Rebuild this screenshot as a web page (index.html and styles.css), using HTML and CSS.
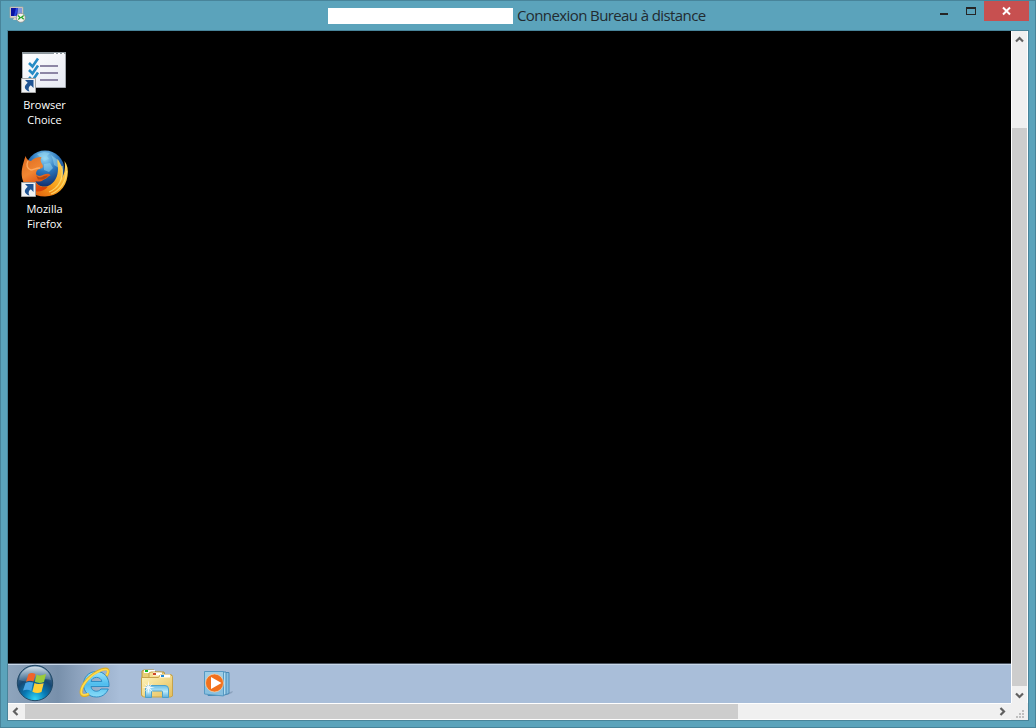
FILE: index.html
```html
<!DOCTYPE html>
<html lang="fr">

<head>
    <meta charset="UTF-8">
    <meta name="viewport" content="width=device-width, initial-scale=1.0">
    <title>Connexion Bureau à distance</title>
    <link rel="stylesheet" href="styles.css">
</head>

<body>
    <div class="window">
        <div class="titlebar">
            <svg class="app-icon" width="18" height="18" viewBox="0 0 18 18">
                <path d="M1 1h13v11H1z" fill="#d9d5cc" stroke="#aaa59c" stroke-width=".7" />
                <path d="M2 2h11v8H2z" fill="#0a12a0" />
                <path d="M7 2h2L7 10H5z" fill="#2748de" />
                <path d="M9 2h4v8H8z" fill="#8296dc" />
                <path d="M5 12h4v2H4z" fill="#d9d5cc" />
                <circle cx="11.8" cy="11.8" r="4.5" fill="#f4f4ef" stroke="#8c8c87" stroke-width=".8" />
                <path d="M9 9.500l2.200 2.200-2 1.800M14.700 9.500L12.500 11.200l2.200 2" fill="none" stroke="#26a526" stroke-width="1.300" />
            </svg>
            <div class="title">
                <span class="title-host"></span>
                <span class="title-text">Connexion Bureau à distance</span>
            </div>
            <div class="controls">
                <span class="minimize"></span>
                <span class="maximize"></span>
                <span class="close">
                    <svg width="9" height="8" viewBox="0 0 9 8">
                        <path d="M1 .5L8 7.5M8 .5L1 7.5" stroke="#fff" stroke-width="2" />
                    </svg>
                </span>
            </div>
        </div>

        <div class="content">
            <div class="remote">
                <div class="desktop">
                    <div class="shortcut">
                        <svg width="48" height="48" viewBox="0 0 48 48">
                            <defs>
                                <linearGradient id="paper" x2="1" y2="1">
                                    <stop offset="0" stop-color="#fff" />
                                    <stop offset="1" stop-color="#e6e9f2" />
                                </linearGradient>
                            </defs>
                            <path d="M2.5 5.5h43v35h-43z" fill="url(#paper)" stroke="#a5aab0" />
                            <path d="M2 5h44v2H2z" fill="#8d979d" />
                            <path d="M34 6h2v1h-2zM38 6h2v1h-2zM42 6h2v1h-2z" fill="#fff" />
                            <path d="M20 19h18M20 26h18M20 33h18" stroke="#8d86a5" stroke-width="2" />
                            <path d="M9 16l3.5 3.5L18 11.500M9 23l3.500 3.500L18 18.500M9 30l3.500 3.500L18 25.500" fill="none" stroke="#268cc5" stroke-width="2.600" />
                            <g id="arrow">
                                <path d="M1.500 31.500h14v14h-14z" fill="#f0f2f4" stroke="#a5a5a5" />
                                <path d="M5 33h8.500v8l-2.700-2.700C8.500 40 8 42 9.500 44.500C4.500 43 3 39.500 7.700 35.700z" fill="#205493" />
                            </g>
                        </svg>
                        <span class="label">Browser<br>Choice</span>
                    </div>
                    <div class="shortcut">
                        <svg width="48" height="48" viewBox="0 0 48 48">
                            <defs>
                                <radialGradient id="globe" cx=".5" cy=".2" r=".75">
                                    <stop offset="0" stop-color="#91d6f5" />
                                    <stop offset=".45" stop-color="#2b78bf" />
                                    <stop offset="1" stop-color="#102a68" />
                                </radialGradient>
                                <linearGradient id="tail" x1="1" x2="0" y2="1">
                                    <stop offset="0" stop-color="#ffe36b" />
                                    <stop offset=".5" stop-color="#f8a21c" />
                                    <stop offset="1" stop-color="#d94408" />
                                </linearGradient>
                                <linearGradient id="fox" x2=".5" y2="1">
                                    <stop offset="0" stop-color="#dc691e" />
                                    <stop offset=".5" stop-color="#f18632" />
                                    <stop offset="1" stop-color="#d84108" />
                                </linearGradient>
                            </defs>
                            <circle cx="25" cy="19" r="19.500" fill="url(#globe)" />
                            <path d="M17 3l7-2 6 1-3 3 2 3-5 2-3-3zM31 4l7 5 1 8-5-3-1-5zM24 13l6-1 3 5-4 4-5-2z" fill="#9bdcf2" opacity=".5" />
                            <path d="M44.500 10C47.500 14 48.500 19 47.500 25C46 37 37 45.500 25 45.500C13 45.500 5 38 3 28L12 25C15 34 22 37 28 35C35 32 38 25 38 18C38 14 37 11 37.500 8C39 10 40 12 41.500 15C43 20 43 24 42 27C45 22 45.500 16 44.500 10z" fill="url(#tail)" />
                            <path d="M42 15C44 27 39 37 29 41M46.500 20C46 32 39 40 31 43" fill="none" stroke="#ffe47a" stroke-width="1.200" opacity=".75" />
                            <path d="M5.500 5C6.500 8 8 9.500 11 10C13.500 7.500 17 6 21.500 6C20 8 20.500 11 22 13C24 15.500 23 17 20 18C17.500 18.500 16 20 16 23C18 26 21 25 24 23.500C27 22 30 22.500 30.500 24.500C28 25 27 28 24 28.500C21 31 18 31 15.500 30C18 36 23 37 28 35.500C23 42 13 42 7 36C2 31 1 24 2 18C2.500 14 4 10 5.500 5z" fill="url(#fox)" />
                            <path d="M16 24C18 27 21 27 24 25L28 24.500C26 28 22 29 18 28.500z" fill="#b4480f" />
                            <path d="M8 10C6 14 7 18 11 19C14 19 15 17 20 17" fill="none" stroke="#ffab60" stroke-width="1.400" />
                            <use href="#arrow" />
                        </svg>
                        <span class="label">Mozilla<br>Firefox</span>
                    </div>
                </div>

                <div class="taskbar">
                    <svg class="start" width="40" height="38" viewBox="0 0 40 38">
                        <defs>
                            <radialGradient id="orb" cx=".5" cy=".95" r=".9">
                                <stop offset="0" stop-color="#31d4f5" />
                                <stop offset=".35" stop-color="#087ab5" />
                                <stop offset=".65" stop-color="#164873" />
                                <stop offset="1" stop-color="#517799" />
                            </radialGradient>
                            <linearGradient id="shine" x2="0" y2="1">
                                <stop offset="0" stop-color="#e9f2f7" stop-opacity=".85" />
                                <stop offset="1" stop-color="#a1bdd0" stop-opacity=".25" />
                            </linearGradient>
                        </defs>
                        <circle cx="20" cy="19" r="17.700" fill="url(#orb)" stroke="#214966" />
                        <path d="M4 16C5 7 12 2.500 20 2.500S35 7 36 16C28 13 15 20 4 16z" fill="url(#shine)" />
                        <path d="M13.500 10C16 8.500 18 9 20.500 10L18.500 17.500C16 16.500 14 16.500 11 17.700z" fill="#f0642a" />
                        <path d="M21.700 10.500C24 12 27 11.500 31 10L29 18C25 19.500 22.500 19 19.800 17.800z" fill="#9bcc3b" />
                        <path d="M10.500 19C13 17.500 16 17.700 18.200 18.600L16.300 27C13.500 25.500 11 25.500 8 26.500z" fill="#4ba6e5" />
                        <path d="M19.500 19C22 20.500 25 20 28.700 19.200L26.500 28C23 29.500 20.500 29 17.400 27.700z" fill="#ffcf36" />
                    </svg>
                    <svg class="task" width="32" height="32" viewBox="0 0 32 32">
                        <defs>
                            <linearGradient id="ie" x2="0" y2="1">
                                <stop offset="0" stop-color="#9be4fc" />
                                <stop offset=".5" stop-color="#4fbdee" />
                                <stop offset="1" stop-color="#8adcf8" />
                            </linearGradient>
                        </defs>
                        <path d="M30 19.500H12C12.500 25 19.500 25.500 22 22H29.300C27 27.500 22.500 30 17.500 30C9.500 30 4.500 24.500 4.500 17.500S9.500 4.500 17.500 4.500S30.500 11 30 19.500zM12 14.500H22.800C22 9 13 9 12 14.500z" fill="url(#ie)" stroke="#2787c0" stroke-width=".9" />
                        <path d="M27.500 9C31 3 29 .800 23 2.500C12 6.500 2.500 17 2 25C2 29.500 6 29.500 10 27" fill="none" stroke="#dfae25" stroke-width="2.800" />
                        <path d="M27.500 8.500C30.500 3.500 29 1.500 23 3C12 7 2.500 17.500 2.200 25C2.500 28.500 6 28.500 9.500 26.800" fill="none" stroke="#ffdc4d" stroke-width="1.700" />
                    </svg>
                    <svg class="task" width="34" height="32" viewBox="0 0 34 32">
                        <defs>
                            <linearGradient id="folder" x2="1" y2="1">
                                <stop offset="0" stop-color="#fff7bf" />
                                <stop offset="1" stop-color="#e5bd58" />
                            </linearGradient>
                            <linearGradient id="stand" x2="0" y2="1">
                                <stop offset="0" stop-color="#69bce4" />
                                <stop offset=".5" stop-color="#b9e9fa" />
                                <stop offset="1" stop-color="#5daedb" />
                            </linearGradient>
                        </defs>
                        <path d="M2 5V3l2-1h10l2 2h8l1 3v21H2z" fill="#e8ce75" stroke="#b69645" />
                        <path d="M4 2h11v3H4z" fill="#fff" /><path d="M5 2h3v2H5z" fill="#15b824" />
                        <path d="M9 8V5l2-1h10l2 3h9v21H9z" fill="#f6df94" stroke="#c3a34f" />
                        <path d="M13 4.500h9v3h-9z" fill="#fff" /><path d="M13 5h3v2h-3z" fill="#cf4627" />
                        <path d="M1.500 9.500h17l2-3h10l2 2v19.500l-2 1h-27l-2-2z" fill="url(#folder)" stroke="#c5a34c" />
                        <path d="M20 6.500h10v3H20z" fill="#fff" /><path d="M21 7h3v2h-3z" fill="#208bdc" />
                        <path d="M5.500 29.500V21q0-3.500 3.500-3.500h16q3.500 0 3.500 3.500v8.500h-6V24q0-1-1-1h-9q-1 0-1 1v5.500z" fill="url(#stand)" stroke="#4ba1cd" />
                        <path d="M8.500 12l.8 6 3.700-3-3 3.700 5 .8-5 .8 3 3.700-3.700-3-.8 5-.8-5-3.700 3 3-3.700-5-.8 5-.8-3-3.700 3.700 3z" fill="#fff" opacity=".85" />
                    </svg>
                    <svg class="task" width="32" height="28" viewBox="0 0 32 28">
                        <path d="M24 23l6-2-1 2-5 2z" fill="#7188a4" opacity=".5" />
                        <path d="M8 2.500h18v21l-3 1H8z" fill="#87bfe1" stroke="#4789b6" />
                        <path d="M5 2h18v22.500l-3 1H5z" fill="#b0dcf1" stroke="#4789b6" />
                        <path d="M1.500 1.500h19v24.500l-19-2z" fill="#87bfdf" stroke="#5699c3" />
                        <path d="M2 2h18v9L2 16z" fill="#b5dbec" opacity=".5" />
                        <circle cx="11.500" cy="13" r="9" fill="#f2711d" stroke="#fbd4a7" stroke-width=".7" />
                        <path d="M8 7v12l10.500-6z" fill="#fff" />
                    </svg>
                </div>
            </div>

            <div class="scroll-v">
                <svg class="arrow-up" width="9" height="7" viewBox="0 0 9 7">
                    <path d="M1 5.500L4.500 2L8 5.500" fill="none" stroke="#606060" stroke-width="2.200" />
                </svg>
                <div class="thumb-v"></div>
                <svg class="arrow-down" width="9" height="7" viewBox="0 0 9 7">
                    <path d="M1 1.500L4.500 5L8 1.500" fill="none" stroke="#606060" stroke-width="2.200" />
                </svg>
            </div>

            <div class="scroll-h">
                <svg class="arrow-left" width="7" height="9" viewBox="0 0 7 9">
                    <path d="M5.500 1L2 4.500L5.500 8" fill="none" stroke="#606060" stroke-width="2.200" />
                </svg>
                <div class="thumb-h"></div>
                <svg class="arrow-right" width="7" height="9" viewBox="0 0 7 9">
                    <path d="M1.500 1L5 4.500L1.500 8" fill="none" stroke="#606060" stroke-width="2.200" />
                </svg>
            </div>

            <div class="corner">
                <svg width="8" height="8" viewBox="0 0 8 8">
                    <path d="M6 0h2v2H6zM3 3h2v2H3zM6 3h2v2H6zM0 6h2v2H0zM3 6h2v2H3zM6 6h2v2H6z" fill="#bfbfbf" />
                </svg>
            </div>
        </div>
    </div>
</body>

</html>
```
FILE: styles.css
```css
* {
    box-sizing: border-box;
}

body {
    margin: 0;
    font-family: "Open Sans", "Noto Sans", sans-serif;
}

svg {
    display: block;
    flex: none;
    overflow: visible;
}

.window {
    width: 1036px;
    height: 728px;
    padding: 0 6px 6px;
    background-color: #5ba3bb;
    border: 1px solid #48849a;
    overflow: hidden;
}

/* title bar */
.titlebar {
    display: flex;
    height: 29px;
}

.app-icon {
    margin: 5px 0 0 2px;
}

.title {
    display: flex;
    margin-left: 301px;
    padding-top: 7px;
}

.title-host {
    width: 185px;
    height: 16px;
    background-color: #fff;
}

.title-text {
    margin: -1px 0 0 4px;
    font-size: 15px;
    line-height: 16px;
    letter-spacing: -0.6px;
    color: #222b30;
    white-space: nowrap;
}

.controls {
    display: flex;
    margin: 0 -1px 0 auto;
    padding-right: 1px;
}

.minimize {
    width: 8px;
    height: 2px;
    margin-top: 12px;
    background-color: #252525;
}

.maximize {
    width: 10px;
    height: 8px;
    margin: 6px 8px 0 18px;
    border: 1px solid #252525;
    border-top-width: 2px;
}

.close {
    display: flex;
    align-items: center;
    justify-content: center;
    width: 45px;
    height: 20px;
    background-color: #c75050;
}

/* client area */
.content {
    display: grid;
    grid-template-columns: 1003px 17px;
    grid-template-rows: 672px 17px;
    width: 1022px;
    border: 1px solid #48849a;
}

.remote {
    display: flex;
    flex-direction: column;
    background-color: #000;
}

.desktop {
    display: flex;
    flex: 1;
    flex-direction: column;
    gap: 22px;
    padding: 16px 0 0 1px;
}

.shortcut {
    display: flex;
    flex-direction: column;
    align-items: center;
    width: 70px;
    height: 82px;
}

.label {
    margin: 2px 0 0 1px;
    font-size: 11px;
    line-height: 15px;
    text-align: center;
    color: #fff;
}

.taskbar {
    display: flex;
    height: 40px;
    border-top: 1px solid #49535f;
    box-shadow: inset 0 1px #c8d7e8;
    background: linear-gradient(90deg, #8fa5bd 0, #7890ab 50px, #8ca2bd 70px, #a9bed9 112px);
}

.start {
    margin: 0 0 0 7px;
}

.task {
    margin: 3px 0 0 24px;
}

.task + .task {
    margin: 4px 0 0 29px;
}

.task:last-child {
    margin-top: 6px;
}

/* scrollbars */
.scroll-v {
    display: flex;
    flex-direction: column;
    align-items: center;
    justify-content: space-between;
    padding: 5px 0 4px;
    background-color: #f0f0f0;
    border-left: 1px solid #fff;
    border-right: 1px solid #fff;
}

.thumb-v {
    width: 15px;
    height: 558px;
    margin-top: 79px;
    background-color: #cdcdcd;
}

.scroll-h {
    display: flex;
    align-items: center;
    background-color: #f0f0f0;
    border-top: 1px solid #fff;
    border-bottom: 1px solid #fff;
}

.arrow-left {
    margin-left: 4px;
}

.thumb-h {
    width: 713px;
    height: 15px;
    margin-left: 6px;
    background-color: #cdcdcd;
}

.arrow-right {
    margin-left: 261px;
}

.corner {
    display: flex;
    align-items: flex-end;
    justify-content: flex-end;
    padding: 0 4px 2px 0;
    background-color: #f0f0f0;
}
```
